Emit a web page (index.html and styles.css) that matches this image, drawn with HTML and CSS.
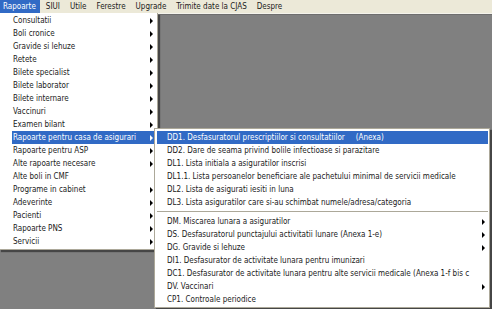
FILE: index.html
```html
<!DOCTYPE html>
<html>
<head>
<meta charset="utf-8">
<link rel="stylesheet" href="styles.css">
</head>
<body>
<div class="menubar">
  <span class="top-item active first">Rapoarte</span>
  <span class="top-item">SIUI</span>
  <span class="top-item">Utile</span>
  <span class="top-item">Ferestre</span>
  <span class="top-item">Upgrade</span>
  <span class="top-item">Trimite date la CJAS</span>
  <span class="top-item">Despre</span>
</div>
<div class="workspace"></div>

<div class="menu main-menu">
  <div class="row sub">Consultatii</div>
  <div class="row sub">Boli cronice</div>
  <div class="row sub">Gravide si lehuze</div>
  <div class="row sub">Retete</div>
  <div class="row sub">Bilete specialist</div>
  <div class="row sub">Bilete laborator</div>
  <div class="row sub">Bilete internare</div>
  <div class="row sub">Vaccinuri</div>
  <div class="row sub">Examen bilant</div>
  <div class="row sub hl">Rapoarte pentru casa de asigurari</div>
  <div class="row sub">Rapoarte pentru ASP</div>
  <div class="row sub">Alte rapoarte necesare</div>
  <div class="row">Alte boli in CMF</div>
  <div class="row sub">Programe in cabinet</div>
  <div class="row sub">Adeverinte</div>
  <div class="row sub">Pacienti</div>
  <div class="row sub">Rapoarte PNS</div>
  <div class="row sub">Servicii</div>
</div>

<div class="menu sub-menu">
  <div class="row hl">DD1. Desfasuratorul prescriptiilor si consultatiilor<span class="note">(Anexa)</span></div>
  <div class="row">DD2. Dare de seama privind bolile infectioase si parazitare</div>
  <div class="row">DL1. Lista initiala a asiguratilor inscrisi</div>
  <div class="row">DL1.1. Lista persoanelor beneficiare ale pachetului minimal de servicii medicale</div>
  <div class="row">DL2. Lista de asigurati iesiti in luna</div>
  <div class="row">DL3. Lista asiguratilor care si-au schimbat numele/adresa/categoria</div>
  <div class="sep"></div>
  <div class="row sub">DM. Miscarea lunara a asiguratilor</div>
  <div class="row sub">DS. Desfasuratorul punctajului activitatii lunare (Anexa 1-e)</div>
  <div class="row sub">DG. Gravide si lehuze</div>
  <div class="row">DI1. Desfasurator de activitate lunara pentru imunizari</div>
  <div class="row">DC1. Desfasurator de activitate lunara pentru alte servicii medicale (Anexa 1-f bis c</div>
  <div class="row sub">DV. Vaccinari</div>
  <div class="row">CP1. Controale periodice</div>
</div>
</body>
</html>
```

FILE: styles.css
```css
html, body {
  margin: 0;
  padding: 0;
}
body {
  width: 492px;
  height: 309px;
  overflow: hidden;
  position: relative;
  background: #808080;
  font-family: "DejaVu Sans Condensed", "DejaVu Sans", sans-serif;
  font-stretch: condensed;
  font-size: 8px;
  color: #1a1a1a;
}
.menubar {
  display: flex;
  height: 13px;
  line-height: 13px;
  background: #ece9d8;
  border-bottom: 1px solid #f4f3ec;
}
.top-item {
  padding: 0 4px 0 6px;
  white-space: nowrap;
}
.top-item.first {
  padding: 0 4px 0 3px;
}
.top-item.active {
  background: #316ac5;
  color: #fff;
}
.workspace {
  height: 295px;
  border-top: 1px solid #6e6e6e;
}
.menu {
  position: absolute;
  background: #fff;
  border: 1px solid #aca899;
  box-shadow: 2px 2px 1px rgba(0, 0, 0, 0.45);
  white-space: nowrap;
}
.main-menu {
  left: -1px;
  top: 13px;
  width: 157px;
  border-top: 0;
  padding: 1px 0 1px 0;
}
.main-menu .row {
  margin: 0 1px 0 12px;
  padding-left: 1px;
}
.sub-menu {
  left: 154px;
  top: 128px;
  width: 331px;
  padding: 2px 1px 1px 2px;
}
.sub-menu .row {
  padding-left: 10px;
}
.row {
  position: relative;
  height: 13px;
  line-height: 13px;
}
.row.sub::after {
  content: "";
  position: absolute;
  right: 3px;
  top: 4px;
  width: 0;
  height: 0;
  border-left: 3px solid #000;
  border-top: 3px solid transparent;
  border-bottom: 3px solid transparent;
}
.row.hl {
  background: #316ac5;
  color: #fff;
}
.row.hl.sub::after {
  border-left-color: #fff;
}
.note {
  margin-left: 11px;
}
.sep {
  height: 6px;
  position: relative;
}
.sep::before {
  content: "";
  position: absolute;
  left: 0;
  right: 0;
  top: 2px;
  border-top: 1px solid #aca899;
}
```
